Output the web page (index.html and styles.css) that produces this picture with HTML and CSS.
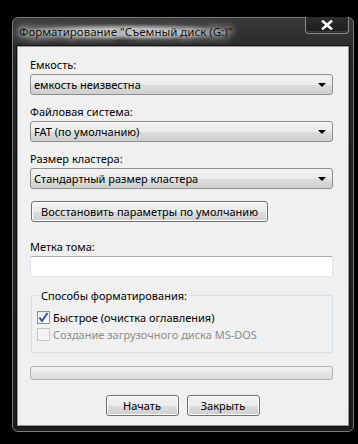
FILE: index.html
```html
<!DOCTYPE html>
<html lang="ru">
<head>
  <meta charset="UTF-8">
  <title>Форматирование</title>
  <link rel="stylesheet" href="styles.css">
</head>
<body>
  <div class="window">
    <div class="titlebar">
      <span class="title">Форматирование "Съемный диск (G:)"</span>
      <div class="close-btn">
        <svg width="12" height="10" viewBox="0 0 12 10">
          <path d="M2 1.5 L10 8.5 M10 1.5 L2 8.5" stroke="#fff" stroke-width="2.6" stroke-linecap="square"/>
        </svg>
      </div>
    </div>

    <div class="client">
      <div class="label">Емкость:</div>
      <div class="combo">
        <span>емкость неизвестна</span>
        <span class="arrow"></span>
      </div>

      <div class="label">Файловая система:</div>
      <div class="combo">
        <span>FAT (по умолчанию)</span>
        <span class="arrow"></span>
      </div>

      <div class="label">Размер кластера:</div>
      <div class="combo">
        <span>Стандартный размер кластера</span>
        <span class="arrow"></span>
      </div>

      <button class="btn btn-restore">Восстановить параметры по умолчанию</button>

      <div class="label label-volume">Метка тома:</div>
      <div class="textbox"></div>

      <div class="group">
        <div class="legend">Способы форматирования:</div>
        <div class="check-list">
          <div class="check-row">
            <span class="checkbox checked">
              <svg width="11" height="11" viewBox="0 0 11 11">
                <path d="M1.5 5.5 L4 9 L9.5 1" fill="none" stroke="#3054a4" stroke-width="2"/>
              </svg>
            </span>
            <span>Быстрое (очистка оглавления)</span>
          </div>
          <div class="check-row disabled">
            <span class="checkbox"></span>
            <span>Создание загрузочного диска MS-DOS</span>
          </div>
        </div>
      </div>

      <div class="progress"></div>

      <div class="footer">
        <button class="btn btn-footer">Начать</button>
        <button class="btn btn-footer">Закрыть</button>
      </div>
    </div>
  </div>
</body>
</html>
```

FILE: styles.css
```css
body {
  margin: 0;
  background: #000;
  font-family: 'Noto Sans', 'Open Sans', sans-serif;
  font-size: 11px;
  color: #000;
}

.window {
  margin: 17px 0 0 12px;
  width: 342px;
  height: 415px;
  box-sizing: border-box;
  border: 1px solid #7a7a7a;
  border-radius: 6px;
  background: linear-gradient(180deg, #3a3a3a 0%, #262626 40px, #1c1c1c 100%);
  padding: 0 4px 5px 4px;
  display: flex;
  flex-direction: column;
}

.titlebar {
  height: 28px;
  display: flex;
  justify-content: space-between;
  align-items: flex-start;
}

.title {
  margin: 6px 0 0 2px;
  padding: 0 4px 0 0;
  line-height: 16px;
  font-size: 11.5px;
  color: #111;
  background: radial-gradient(ellipse at center, rgba(255,255,255,0.55) 30%, rgba(255,255,255,0) 72%);
  text-shadow: 0 0 6px #fff, 0 0 10px #fff, 0 0 14px rgba(255,255,255,0.9);
}

.close-btn {
  width: 44px;
  height: 17px;
  margin-top: -1px;
  box-sizing: border-box;
  border: 1px solid #8a8a8a;
  border-top: none;
  border-radius: 0 0 4px 4px;
  box-shadow: inset 0 0 0 1px #2a2a2a, inset 0 -1px 0 1px rgba(255,255,255,0.15);
  background: linear-gradient(180deg, #2e2e2e, #1a1a1a);
  display: flex;
  align-items: center;
  justify-content: center;
}

.client {
  flex: 1;
  background: #f0f0f0;
  border: 1px solid #9a9a9a;
  box-shadow: 0 0 0 1px #111;
  padding: 10px 15px 0 12px;
  display: flex;
  flex-direction: column;
}

.label {
  line-height: 15px;
  margin-bottom: 2px;
}

.combo {
  height: 21px;
  box-sizing: border-box;
  border: 1px solid #8e8f8f;
  border-radius: 3px;
  background: linear-gradient(180deg, #f2f2f2 0%, #ebebeb 50%, #dddddd 51%, #cfcfcf 100%);
  display: flex;
  align-items: center;
  justify-content: space-between;
  padding: 0 6px 0 3px;
  margin-bottom: 9px;
}

.arrow {
  width: 0;
  height: 0;
  border-left: 4px solid transparent;
  border-right: 4px solid transparent;
  border-top: 4px solid #000;
}

.btn {
  font-family: inherit;
  font-size: 11px;
  color: #000;
  height: 21px;
  padding: 0;
  white-space: nowrap;
  border: 1px solid #707070;
  border-radius: 3px;
  background: linear-gradient(180deg, #f2f2f2 0%, #ebebeb 50%, #dddddd 51%, #cfcfcf 100%);
  box-shadow: inset 0 0 0 1px #fcfcfc;
}

.btn-restore {
  width: 237px;
  margin: 3px 0 0 1px;
}

.label-volume {
  margin-top: 17px;
}

.textbox {
  height: 21px;
  box-sizing: border-box;
  border: 1px solid #e2e3ea;
  border-top-color: #abadb3;
  border-radius: 2px;
  background: #fff;
}

.group {
  margin: 18px 0 0 1px;
  height: 58px;
  box-sizing: border-box;
  border: 1px solid #d5dfe5;
  border-radius: 3px;
  padding: 0 0 0 5px;
}

.legend {
  width: fit-content;
  margin: -8px 0 0 2px;
  padding: 0 2px;
  background: #f0f0f0;
  line-height: 15px;
}

.check-list {
  padding-top: 6px;
}

.check-row {
  display: flex;
  align-items: center;
  gap: 3px;
  height: 17px;
}

.check-row.disabled {
  color: #8d8d8d;
}

.checkbox {
  width: 13px;
  height: 13px;
  box-sizing: border-box;
  border: 1px solid #8f8f8f;
  background: linear-gradient(135deg, #e6e6e6, #fefefe);
  display: flex;
  align-items: center;
  justify-content: center;
}

.check-row.disabled .checkbox {
  border-color: #c6c6c6;
  background: #f4f4f4;
}

.progress {
  margin-top: 13px;
  height: 14px;
  box-sizing: border-box;
  border: 1px solid #b2b2b2;
  border-radius: 3px;
  background: linear-gradient(180deg, #f3f3f3 0%, #e6e6e6 50%, #d9d9d9 100%);
}

.footer {
  margin-top: 15px;
  display: flex;
  justify-content: center;
  gap: 8px;
  padding-left: 2px;
}

.btn-footer {
  width: 73px;
}
```
